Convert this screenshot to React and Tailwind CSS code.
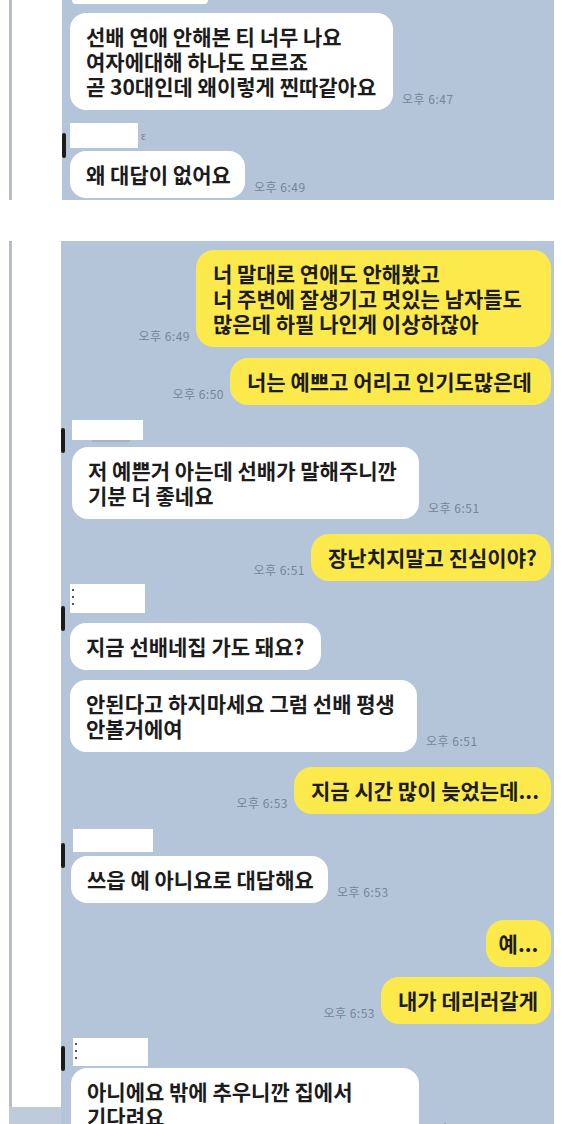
import React from "react";

const Ts = ({ t }) => (
  <span className="text-[12px] leading-[14px] tracking-[0.5px] font-normal text-[#74849a] pb-[4px] whitespace-nowrap">
    {t}
  </span>
);

const Yellow = ({ w, lines, ts, mt, center }) => (
  <div className={`flex justify-end items-end gap-[6px] ${mt}`}>
    {ts && <Ts t={ts} />}
    <div
      className={`bg-[#fce94b] rounded-[18px] py-[11px] text-[21px] leading-[25px] text-[#1c1c1c] whitespace-nowrap ${w} ${center ? "text-center" : "pl-[17px]"}`}
    >
      {lines.map((l, i) => (
        <div key={i}>{l}</div>
      ))}
    </div>
  </div>
);

const White = ({ w, lines, ts, mt }) => (
  <div className={`flex items-end gap-[9px] ${mt}`}>
    <div
      className={`bg-white rounded-[16px] py-[11px] pl-[16px] text-[21px] leading-[25px] text-[#1c1c1c] whitespace-nowrap ${w}`}
    >
      {lines.map((l, i) => (
        <div key={i}>{l}</div>
      ))}
    </div>
    {ts && <Ts t={ts} />}
  </div>
);

const Dots = () => (
  <div className="flex flex-col gap-[5px] pt-[5px] pl-[2px]">
    <span className="w-[2px] h-[2px] bg-[#555]" />
    <span className="w-[2px] h-[2px] bg-[#555]" />
    <span className="w-[2px] h-[2px] bg-[#555]" />
  </div>
);

export default function App() {
  return (
    <div className="w-[562px] h-[1124px] overflow-hidden bg-white font-['Noto_Sans_CJK_KR','Noto_Sans',sans-serif] font-semibold">
      {/* top panel */}
      <div className="ml-[9px] w-[545px] h-[200px] flex overflow-hidden">
        <div className="w-[53px] bg-white border-l-[3px] border-[#b7bec8]" />
        <div className="flex-1 bg-[#b4c5da] pr-[3px] overflow-hidden">
          <div className="ml-[10px] w-[136px] h-[4px] bg-white rounded-b-[4px]" />
          <div className="ml-[8px]">
            <White
              mt="mt-[9px]"
              w="w-[323px]"
              ts="오후 6:47"
              lines={[
                "선배 연애 안해본 티 너무 나요",
                "여자에대해 하나도 모르죠",
                "곧 30대인데 왜이렇게 찐따같아요",
              ]}
            />
          </div>
          <div className="flex mt-[13px]">
            <div className="w-[4px] h-[25px] mt-[10px] bg-[#1b1b1b] rounded-[2px]" />
            <div className="ml-[4px]">
              <div className="flex items-center">
                <div className="w-[68px] h-[25px] bg-white" />
                <span className="ml-[3px] text-[10px] font-normal text-[#7d848e]">ε</span>
              </div>
              <White mt="mt-[3px]" w="w-[175px]" ts="오후 6:49" lines={["왜 대답이 없어요"]} />
            </div>
          </div>
        </div>
      </div>

      {/* second panel */}
      <div className="mt-[41px] ml-[9px] w-[545px] flex">
        <div className="w-[52px] bg-[#bfcbda]">
          <div className="h-[866px] bg-white border-l-[3px] border-[#b7bec8]" />
        </div>
        <div className="flex-1 bg-[#b4c5da] pr-[3px] h-[900px]">
          <Yellow
            mt="mt-[9px]"
            w="w-[355px]"
            ts="오후 6:49"
            lines={[
              "너 말대로 연애도 안해봤고",
              "너 주변에 잘생기고 멋있는 남자들도",
              "많은데 하필 나인게 이상하잖아",
            ]}
          />
          <Yellow mt="mt-[11px]" w="w-[321px]" ts="오후 6:50" lines={["너는 예쁘고 어리고 인기도많은데"]} />

          {/* group 1 */}
          <div className="flex mt-[15px]">
            <div className="w-[4px] h-[25px] mt-[8px] bg-[#1b1b1b] rounded-[2px]" />
            <div className="ml-[7px]">
              <div className="w-[71px] h-[20px] bg-white" />
              <div className="ml-[20px] w-[38px] h-[2px] bg-[#a9b3bf]" />
              <White
                mt="mt-[5px]"
                w="w-[347px]"
                ts="오후 6:51"
                lines={["저 예쁜거 아는데 선배가 말해주니깐", "기분 더 좋네요"]}
              />
            </div>
          </div>

          <Yellow mt="mt-[15px]" w="w-[240px]" ts="오후 6:51" lines={["장난치지말고 진심이야?"]} />

          {/* group 2 */}
          <div className="flex mt-[3px]">
            <div className="w-[4px] h-[25px] mt-[22px] bg-[#1b1b1b] rounded-[2px]" />
            <div className="ml-[5px]">
              <div className="w-[75px] h-[29px] bg-white flex">
                <Dots />
              </div>
              <White mt="mt-[10px]" w="w-[251px]" lines={["지금 선배네집 가도 돼요?"]} />
              <White
                mt="mt-[10px]"
                w="w-[347px]"
                ts="오후 6:51"
                lines={["안된다고 하지마세요 그럼 선배 평생", "안볼거에여"]}
              />
            </div>
          </div>

          <Yellow mt="mt-[15px]" w="w-[257px]" ts="오후 6:53" lines={["지금 시간 많이 늦었는데..."]} />

          {/* group 3 */}
          <div className="flex mt-[15px]">
            <div className="w-[4px] h-[25px] mt-[14px] bg-[#1b1b1b] rounded-[2px]" />
            <div className="ml-[6px]">
              <div className="ml-[2px] w-[80px] h-[23px] bg-white" />
              <White mt="mt-[4px]" w="w-[257px]" ts="오후 6:53" lines={["쓰읍 예 아니요로 대답해요"]} />
            </div>
          </div>

          <Yellow mt="mt-[17px]" w="w-[65px]" center lines={["예..."]} />
          <Yellow mt="mt-[10px]" w="w-[170px]" ts="오후 6:53" lines={["내가 데리러갈게"]} />

          {/* group 4 */}
          <div className="flex mt-[14px]">
            <div className="w-[4px] h-[25px] mt-[8px] bg-[#1b1b1b] rounded-[2px]" />
            <div className="ml-[6px]">
              <div className="ml-[2px] w-[75px] h-[28px] bg-white flex">
                <Dots />
              </div>
              <White
                mt="mt-[2px]"
                w="w-[348px]"
                ts="오후 6:54"
                lines={["아니에요 밖에 추우니깐 집에서", "기다려요"]}
              />
            </div>
          </div>
        </div>
      </div>
    </div>
  );
}
